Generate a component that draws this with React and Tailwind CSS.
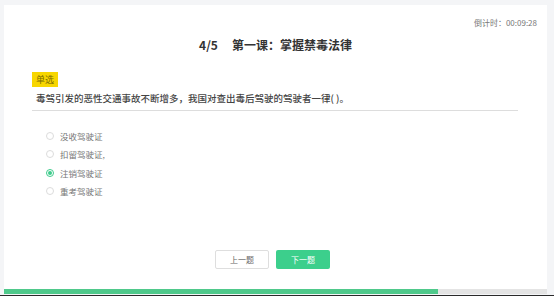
export default function App() {
  const options = ["没收驾驶证", "扣留驾驶证,", "注销驾驶证", "重考驾驶证"];
  const selected = 2;
  return (
    <div
      className="w-[554px] h-[296px] bg-[#f4f5f7] flex flex-col overflow-hidden"
      style={{ fontFamily: '"Noto Sans CJK SC", "Noto Sans", sans-serif' }}
    >
      <div className="pt-[5px] pl-[4px] flex-1">
        <div className="w-[543px] h-[289px] bg-white flex flex-col">
          <div className="flex justify-end pr-[10px] pt-[12px] text-[8px] leading-[12px] text-[#777]">
            倒计时：00:09:28
          </div>
          <div className="flex justify-center mt-[8px] text-[12px] leading-[16px] font-bold text-[#333]">
            <span>4/5</span>
            <span className="ml-[14px]">第一课：掌握禁毒法律</span>
          </div>
          <div className="pl-[28px] mt-[19px] flex flex-col">
            <div className="flex">
              <span className="bg-[#f7d600] text-[#7a6a00] text-[9px] leading-[15px] px-[4px]">单选</span>
            </div>
            <div className="w-[486px] mt-[4px] pl-[4px] pb-[5px] border-b border-[#dddddd] text-[9.5px] leading-[14px] font-medium text-[#444]">
              毒驾引发的恶性交通事故不断增多，我国对查出毒后驾驶的驾驶者一律( )。
            </div>
            <div className="mt-[16px] pl-[14px] flex flex-col">
              {options.map((o, i) => (
                <div key={i} className="h-[18.3px] flex items-center gap-[6px]">
                  {i === selected ? (
                    <span className="w-[8px] h-[8px] rounded-full border border-[#3ecb8c] flex items-center justify-center">
                      <span className="w-[4px] h-[4px] rounded-full bg-[#3ecb8c]"></span>
                    </span>
                  ) : (
                    <span className="w-[8px] h-[8px] rounded-full border border-[#dcdcdc]"></span>
                  )}
                  <span className="text-[8.5px] leading-[12px] text-[#777]">{o}</span>
                </div>
              ))}
            </div>
          </div>
          <div className="flex justify-center gap-[7px] mt-auto mb-[20px] pr-[6px]">
            <button className="w-[54px] h-[19px] border border-[#dedede] rounded-[2px] bg-white text-[8px] text-[#666] flex items-center justify-center">
              上一题
            </button>
            <button className="w-[54px] h-[19px] rounded-[2px] bg-[#3ccf8c] text-[8px] text-white flex items-center justify-center">
              下一题
            </button>
          </div>
          <div className="h-[5px] w-full bg-[#e4e4e4] flex">
            <div className="h-full w-[434px] bg-[#4fc98b]"></div>
          </div>
        </div>
      </div>
      <div className="h-[1px] bg-[#2a2a2a]"></div>
    </div>
  );
}
